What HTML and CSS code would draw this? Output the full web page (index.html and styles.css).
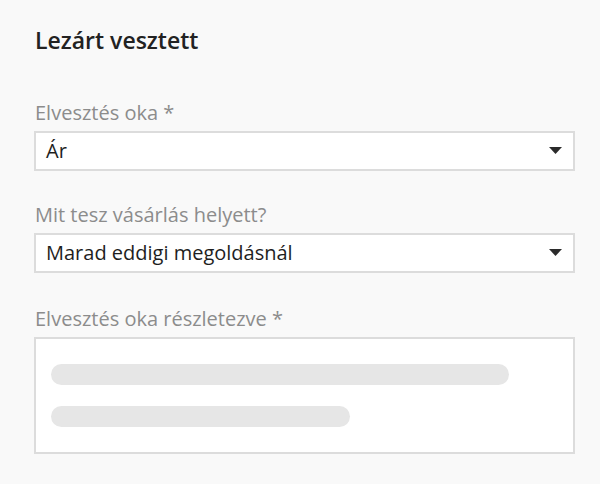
FILE: index.html
```html
<!DOCTYPE html>
<html lang="hu">
<head>
<meta charset="utf-8">
<link rel="stylesheet" href="styles.css">
</head>
<body>
<div class="panel">
  <h1 class="title">Lezárt vesztett</h1>
  <div class="field field-first">
    <label class="label">Elvesztés oka *</label>
    <div class="select">
      <span class="value">Ár</span>
      <svg class="caret" width="13" height="7" viewBox="0 0 13 7"><path d="M0 0H13L6.5 7Z" fill="#2b2b2b"/></svg>
    </div>
  </div>
  <div class="field field-second">
    <label class="label">Mit tesz vásárlás helyett?</label>
    <div class="select">
      <span class="value">Marad eddigi megoldásnál</span>
      <svg class="caret" width="13" height="7" viewBox="0 0 13 7"><path d="M0 0H13L6.5 7Z" fill="#2b2b2b"/></svg>
    </div>
  </div>
  <div class="field field-third">
    <label class="label">Elvesztés oka részletezve *</label>
    <div class="textarea">
      <div class="bar bar-long"></div>
      <div class="bar bar-short"></div>
    </div>
  </div>
</div>
</body>
</html>
```
FILE: styles.css
```css
html, body {
  margin: 0;
  padding: 0;
  background: #f9f9f9;
}
body {
  font-family: "Open Sans", "Liberation Sans", sans-serif;
  width: 600px;
  height: 484px;
  overflow: hidden;
}
.panel {
  padding: 25px 25px 0 34px;
  display: flex;
  flex-direction: column;
}
.title {
  margin: 0 0 0 1px;
  font-size: 23px;
  font-weight: 600;
  color: #222;
  line-height: 30px;
}
.field {
  display: flex;
  flex-direction: column;
}
.field-first { margin-top: 44px; }
.field-second { margin-top: 30px; }
.field-third { margin-top: 32px; }
.label {
  font-size: 20px;
  color: #8c8c8c;
  line-height: 28px;
  padding-left: 1px;
  margin-bottom: 4px;
}
.select {
  height: 36px;
  background: #fff;
  border: 2px solid #dcdcdc;
  display: flex;
  align-items: center;
  justify-content: space-between;
  padding: 0 11px 0 10px;
}
.value {
  font-size: 20px;
  color: #1e1e1e;
  line-height: 28px;
}
.caret { display: block; margin-top: -2px; }
.textarea {
  height: 88px;
  background: #fff;
  border: 2px solid #dcdcdc;
  padding: 25px 0 0 15px;
  display: flex;
  flex-direction: column;
  gap: 21px;
}
.bar {
  height: 21px;
  border-radius: 11px;
  background: #e6e6e6;
}
.bar-long { width: 458px; }
.bar-short { width: 299px; }
```
